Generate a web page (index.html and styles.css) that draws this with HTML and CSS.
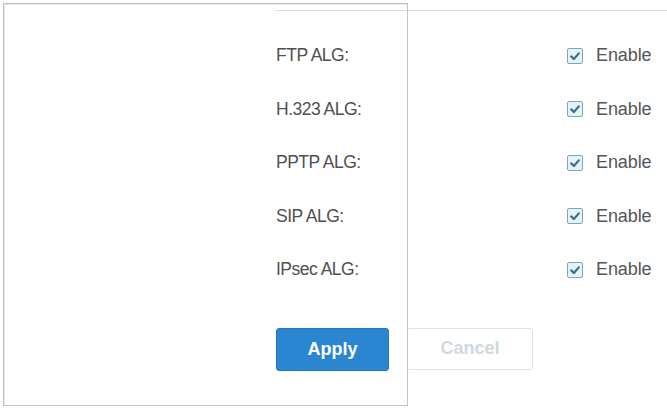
FILE: index.html
```
<!DOCTYPE html>
<html>
<head>
<meta charset="utf-8">
<link rel="stylesheet" href="styles.css">
</head>
<body>
<div class="page">
  <div class="topline"></div>
  <div class="rows">
    <div class="label">FTP ALG:</div>
    <label class="opt"><span class="cb"><svg viewBox="0 0 14 14"><path d="M3.2 7.4 L5.9 10 L10.8 4.4" /></svg></span>Enable</label>
    <div class="label">H.323 ALG:</div>
    <label class="opt"><span class="cb"><svg viewBox="0 0 14 14"><path d="M3.2 7.4 L5.9 10 L10.8 4.4" /></svg></span>Enable</label>
    <div class="label">PPTP ALG:</div>
    <label class="opt"><span class="cb"><svg viewBox="0 0 14 14"><path d="M3.2 7.4 L5.9 10 L10.8 4.4" /></svg></span>Enable</label>
    <div class="label">SIP ALG:</div>
    <label class="opt"><span class="cb"><svg viewBox="0 0 14 14"><path d="M3.2 7.4 L5.9 10 L10.8 4.4" /></svg></span>Enable</label>
    <div class="label">IPsec ALG:</div>
    <label class="opt"><span class="cb"><svg viewBox="0 0 14 14"><path d="M3.2 7.4 L5.9 10 L10.8 4.4" /></svg></span>Enable</label>
  </div>
  <div class="actions">
    <button class="btn apply">Apply</button>
    <button class="btn cancel">Cancel</button>
  </div>
  <div class="frame"></div>
</div>
</body>
</html>
```
FILE: styles.css
```
html, body {
  margin: 0;
  padding: 0;
  background: #fff;
}
body {
  width: 667px;
  height: 410px;
  overflow: hidden;
  font-family: "Liberation Sans", Arial, sans-serif;
}
.page {
  position: relative;
  width: 667px;
  height: 410px;
  padding-left: 276px;
  padding-top: 10px;
  box-sizing: border-box;
}
.topline {
  margin-left: -1px;
  height: 0;
  border-top: 1px solid #dcdcdc;
}
.rows {
  margin-top: 18px;
  display: grid;
  grid-template-columns: 291px auto;
  grid-auto-rows: 53.5px;
  align-items: center;
}
.label {
  font-size: 17.5px;
  color: #505050;
  letter-spacing: -0.5px;
}
.opt {
  display: flex;
  align-items: center;
  gap: 13px;
  font-size: 18px;
  color: #555;
  letter-spacing: -0.1px;
}
.cb {
  flex: 0 0 auto;
  box-sizing: border-box;
  width: 16px;
  height: 16px;
  border: 1px solid #8ea2ac;
  border-radius: 2px;
  background: #e0f4f9;
  display: flex;
}
.cb svg {
  width: 14px;
  height: 14px;
}
.cb path {
  fill: none;
  stroke: #3d6d8a;
  stroke-width: 2.2;
  stroke-linecap: round;
  stroke-linejoin: round;
}
.actions {
  margin-top: 31px;
  display: flex;
  gap: 18px;
  align-items: flex-start;
}
.btn {
  font-family: "Liberation Sans", Arial, sans-serif;
  font-weight: bold;
  font-size: 18px;
  border-radius: 3px;
  padding: 0;
}
.apply {
  width: 113px;
  height: 43px;
  background: #2a86d1;
  border: 1px solid #2478bf;
  color: #fff;
}
.cancel {
  width: 126px;
  height: 42px;
  background: #fff;
  border: 1px solid #dde2e5;
  color: #cfd9e0;
}
.frame {
  position: absolute;
  left: 3px;
  top: 3px;
  width: 403px;
  height: 401px;
  border: 1px solid #c4c4c4;
  box-shadow: 1px 1px 0 #e6e6e6 inset;
  pointer-events: none;
}
```
